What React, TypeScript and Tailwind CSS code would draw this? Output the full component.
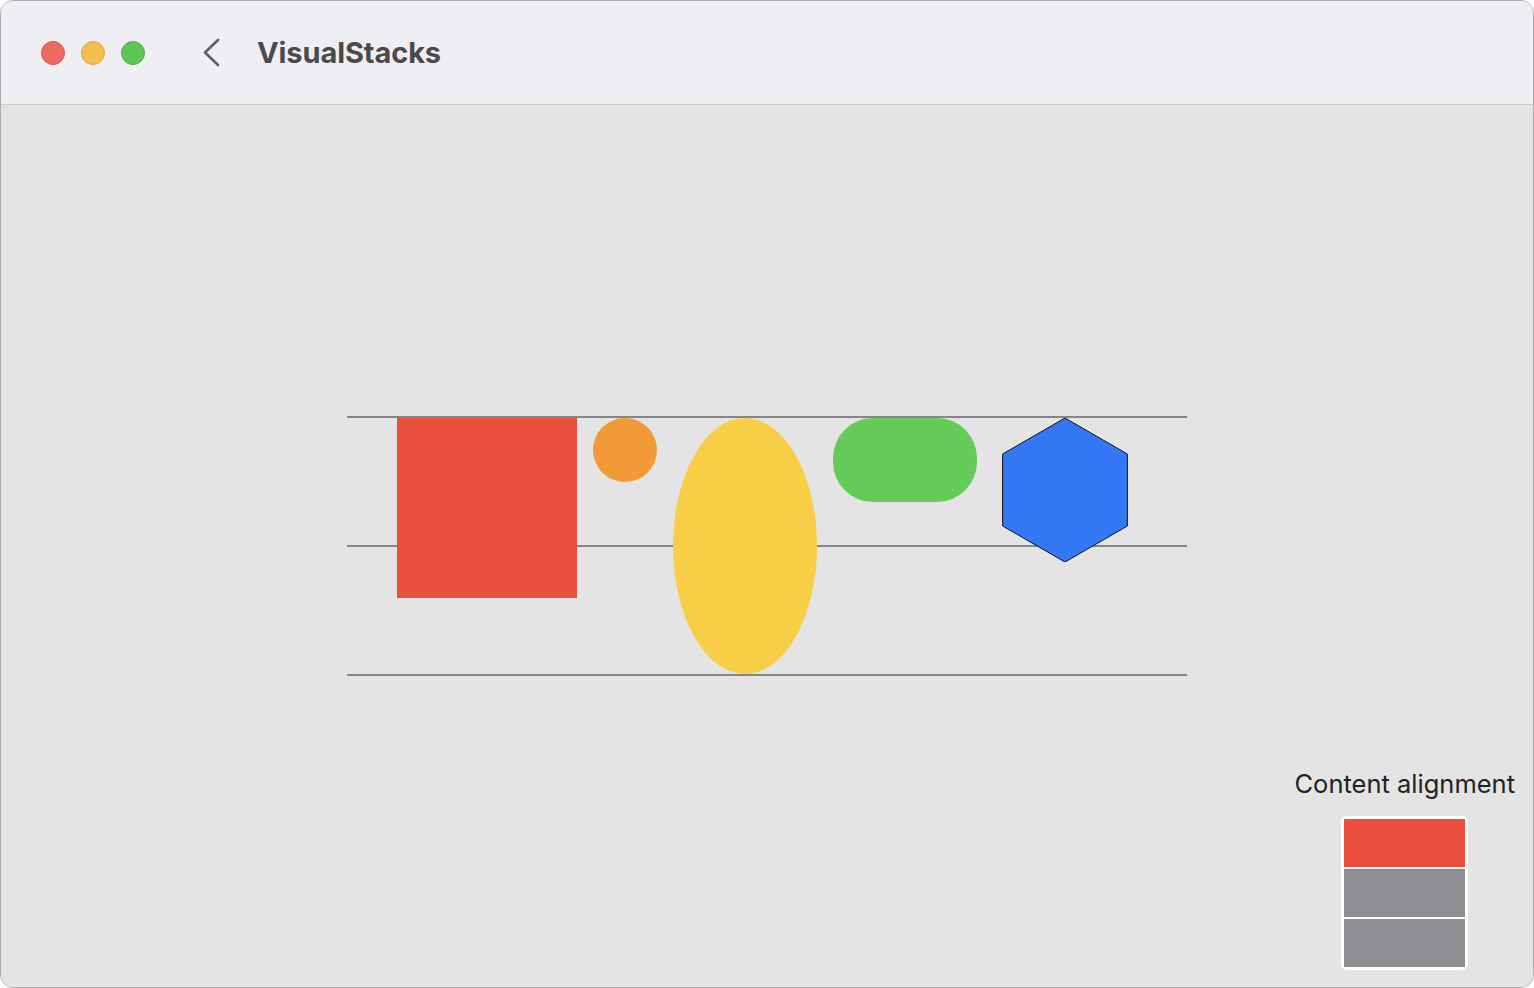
import React from 'react';

const hexPoints = '72,0 134.35,36 134.35,108 72,144 9.65,108 9.65,36';

export default function App() {
  return (
    <div className="w-[1534px] h-[988px] bg-white" style={{ fontFamily: 'Inter, "Noto Sans", sans-serif' }}>
      <div className="w-full h-full rounded-[13px] border border-[#ababab] overflow-hidden flex flex-col">
        {/* Title bar */}
        <header className="h-[104px] shrink-0 bg-[#efeef3] border-b border-[#cdcdcf] flex items-center pl-[40px]">
          <div className="flex items-center gap-4">
            <span className="w-6 h-6 rounded-full bg-[#ee6a5f] border border-[#d9574c]" />
            <span className="w-6 h-6 rounded-full bg-[#f5bf4f] border border-[#dca540]" />
            <span className="w-6 h-6 rounded-full bg-[#61c554] border border-[#4fae43]" />
          </div>
          <svg className="ml-[57px]" width="20" height="30" viewBox="0 0 20 30" fill="none">
            <path d="M16 2 L3 14.5 L16 27" stroke="#5f5f62" strokeWidth="2.6" strokeLinecap="round" strokeLinejoin="round" />
          </svg>
          <h1 className="ml-[35px] text-[29px] font-bold text-[#4a4a4c] tracking-[-0.1px]">VisualStacks</h1>
        </header>

        {/* Content */}
        <main className="flex-1 bg-[#e4e4e4] grid">
          <div className="col-start-1 row-start-1 self-center justify-self-center relative flex items-start gap-4 px-[50px] w-[840px] h-[256px]">
            {/* guide lines */}
            <div className="absolute left-0 right-0 top-[-2px] h-[2px] bg-[#858589]" />
            <div className="absolute left-0 right-0 top-[127px] h-[2px] bg-[#858589]" />
            <div className="absolute left-0 right-0 top-[256px] h-[2px] bg-[#858589]" />

            <div className="relative w-[180px] h-[180px] bg-[#eb4f3d]" />
            <div className="relative w-16 h-16 rounded-full bg-[#f29a38]" />
            <div className="relative w-[144px] h-[256px] rounded-[50%] bg-[#f7ce46]" />
            <div className="relative w-[144px] h-[84px] rounded-[40px] bg-[#64cb58]" />
            <svg className="relative" width="144" height="144" viewBox="0 0 144 144">
              <polygon points={hexPoints} fill="#3478f6" stroke="#111" strokeWidth="1" />
            </svg>
          </div>

          <div className="col-start-1 row-start-1 self-end justify-self-end flex flex-col items-center gap-[18px] pr-[18px] pb-[17px]">
            <span className="text-[25.5px] leading-[29px] text-[#222224]">Content alignment</span>
            <div className="bg-white rounded-[6px] p-[3px] flex flex-col gap-[2px]">
              <div className="w-[121px] h-[48px] bg-[#eb4f3d]" />
              <div className="w-[121px] h-[48px] bg-[#8e8d92]" />
              <div className="w-[121px] h-[48px] bg-[#8e8d92]" />
            </div>
          </div>
        </main>
      </div>
    </div>
  );
}
